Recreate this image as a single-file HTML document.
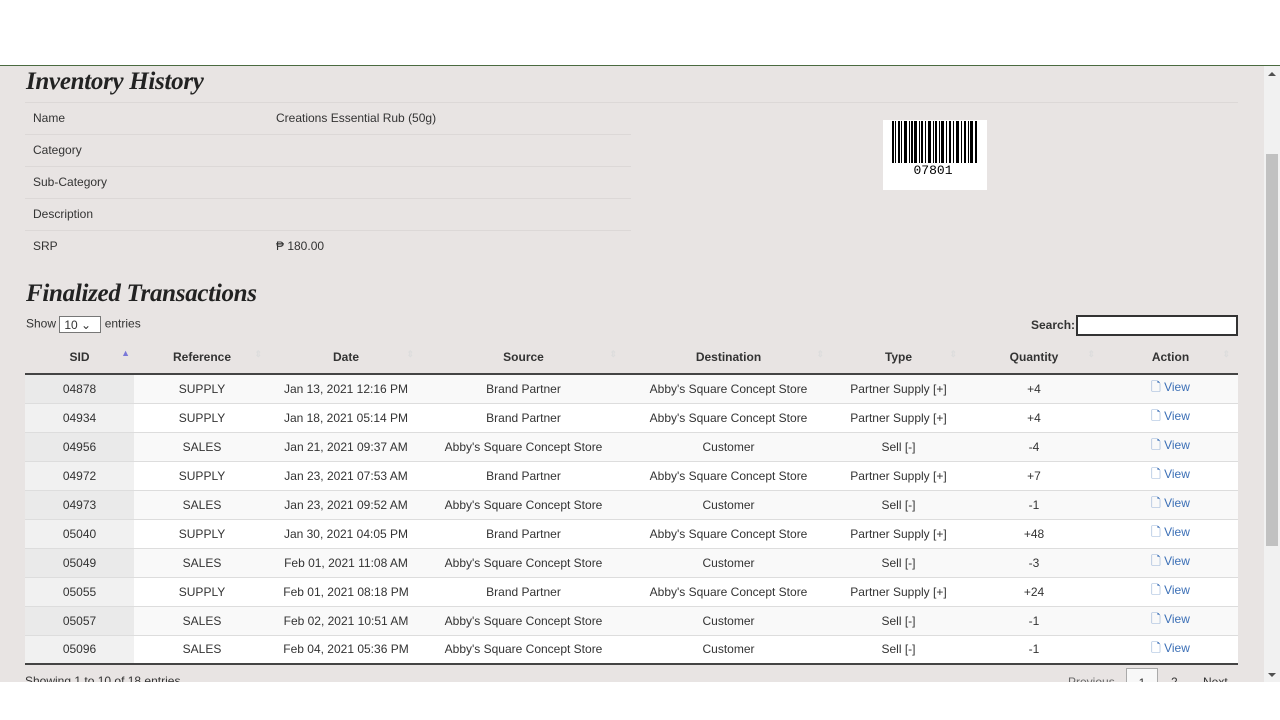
<!DOCTYPE html>
<html><head><style>
*{margin:0;padding:0;box-sizing:border-box}
body{width:1280px;height:720px;background:#fff;font-family:"Liberation Sans",Arial,sans-serif;font-size:12px;color:#333;position:relative;overflow:hidden}
#view{position:absolute;left:0;top:65px;width:1280px;height:617px;background:#e8e4e3;border-top:1px solid #4a6a40;overflow:hidden}
.sb{position:absolute;right:0;top:0;width:16px;height:617px;background:#f1f1f1}
.thumb{position:absolute;left:2px;top:88px;width:12px;height:392px;background:#c1c1c1}
h1{position:absolute;font-family:"Liberation Serif",serif;font-style:italic;font-weight:bold;font-size:25px;color:#222;letter-spacing:-0.3px}
.info{position:absolute;left:25px;top:36px;width:606px;border-collapse:collapse}
.info td{height:32px;border-top:1px solid #dcd8d7;padding-left:8px;color:#333}
.line{position:absolute;left:25px;top:36px;width:1213px;border-top:1px solid #dcd8d7}
.bc{position:absolute;left:883px;top:54px;width:104px;height:70px;background:#fff}
table.dt{position:absolute;left:25px;top:274px;width:1213px;border-collapse:collapse;table-layout:fixed}
.dt th{height:34px;font-weight:bold;color:#333;border-bottom:2px solid #444;text-align:center;position:relative}
.dt td{height:29px;text-align:center;border-top:1px solid #ddd;background:#fff}
.dt tr.o td{background:#f9f9f9}
.dt td.s{background:#f1f1f1}
.dt tr.o td.s{background:#eaeaea}
.dt tbody tr:last-child td{border-bottom:2px solid #444}
.ar{position:absolute;right:8px;top:9px;font-size:9px;color:#ddd}
a{color:#3b6fb6;text-decoration:none}
</style></head><body>
<div id="view">
<div class="sb"><div style="position:absolute;left:4px;top:6px;border:4px solid transparent;border-bottom:4px solid #505050;border-top:0"></div><div class="thumb"></div><div style="position:absolute;left:4px;bottom:6px;border:4px solid transparent;border-top:4px solid #505050;border-bottom:0"></div></div>
<h1 style="left:26px;top:2px">Inventory History</h1>
<div class="line"></div>
<table class="info">
<tr><td style="width:243px;border-top:0">Name</td><td style="border-top:0">Creations Essential Rub (50g)</td></tr>
<tr><td>Category</td><td></td></tr>
<tr><td>Sub-Category</td><td></td></tr>
<tr><td>Description</td><td></td></tr>
<tr><td>SRP</td><td>₱ 180.00</td></tr>
</table>
<div class="bc"><svg width="104" height="70"><g fill="#000">
<rect x="9" y="1" width="2" height="42"/><rect x="12" y="1" width="1" height="42"/><rect x="15" y="1" width="2" height="42"/><rect x="18" y="1" width="1" height="42"/><rect x="21" y="1" width="3" height="42"/><rect x="26" y="1" width="1" height="42"/><rect x="28" y="1" width="2" height="42"/><rect x="31" y="1" width="3" height="42"/><rect x="36" y="1" width="1" height="42"/><rect x="38" y="1" width="2" height="42"/><rect x="42" y="1" width="1" height="42"/><rect x="45" y="1" width="3" height="42"/><rect x="50" y="1" width="1" height="42"/><rect x="52" y="1" width="2" height="42"/><rect x="56" y="1" width="1" height="42"/><rect x="58" y="1" width="3" height="42"/><rect x="63" y="1" width="1" height="42"/><rect x="66" y="1" width="2" height="42"/><rect x="70" y="1" width="1" height="42"/><rect x="73" y="1" width="3" height="42"/><rect x="78" y="1" width="1" height="42"/><rect x="81" y="1" width="2" height="42"/><rect x="85" y="1" width="1" height="42"/><rect x="87" y="1" width="3" height="42"/><rect x="92" y="1" width="2" height="42"/></g>
<text x="50" y="54" font-family="Liberation Mono,monospace" font-size="13" text-anchor="middle" fill="#000">07801</text></svg></div>
<h1 style="left:26px;top:214px">Finalized Transactions</h1>
<div style="position:absolute;left:26px;top:250px;font-size:12px">Show <span style="display:inline-block;width:42px;height:17px;border:1px solid #777;background:#fff;vertical-align:middle;padding:1px 4px;font-size:12px">10 &#8964;</span> entries</div>
<div style="position:absolute;left:1031px;top:252px;font-weight:bold">Search:</div>
<div style="position:absolute;left:1076px;top:249px;width:162px;height:21px;border:2px solid #333;background:#fff"></div>
<table class="dt">
<colgroup><col style="width:109px"><col style="width:136px"><col style="width:152px"><col style="width:203px"><col style="width:207px"><col style="width:133px"><col style="width:138px"><col style="width:135px"></colgroup>
<thead><tr><th>SID<span class="ar" style="color:#7a78d8;right:4px;top:8px">▲</span></th><th>Reference<span class="ar">⇕</span></th><th>Date<span class="ar">⇕</span></th><th>Source<span class="ar">⇕</span></th><th>Destination<span class="ar">⇕</span></th><th>Type<span class="ar">⇕</span></th><th>Quantity<span class="ar">⇕</span></th><th>Action<span class="ar">⇕</span></th></tr></thead>
<tbody>
<tr class="o"><td class="s">04878</td><td>SUPPLY</td><td>Jan 13, 2021 12:16 PM</td><td>Brand Partner</td><td>Abby's Square Concept Store</td><td>Partner Supply [+]</td><td>+4</td><td><a>🗋 View</a></td></tr>
<tr><td class="s">04934</td><td>SUPPLY</td><td>Jan 18, 2021 05:14 PM</td><td>Brand Partner</td><td>Abby's Square Concept Store</td><td>Partner Supply [+]</td><td>+4</td><td><a>🗋 View</a></td></tr>
<tr class="o"><td class="s">04956</td><td>SALES</td><td>Jan 21, 2021 09:37 AM</td><td>Abby's Square Concept Store</td><td>Customer</td><td>Sell [-]</td><td>-4</td><td><a>🗋 View</a></td></tr>
<tr><td class="s">04972</td><td>SUPPLY</td><td>Jan 23, 2021 07:53 AM</td><td>Brand Partner</td><td>Abby's Square Concept Store</td><td>Partner Supply [+]</td><td>+7</td><td><a>🗋 View</a></td></tr>
<tr class="o"><td class="s">04973</td><td>SALES</td><td>Jan 23, 2021 09:52 AM</td><td>Abby's Square Concept Store</td><td>Customer</td><td>Sell [-]</td><td>-1</td><td><a>🗋 View</a></td></tr>
<tr><td class="s">05040</td><td>SUPPLY</td><td>Jan 30, 2021 04:05 PM</td><td>Brand Partner</td><td>Abby's Square Concept Store</td><td>Partner Supply [+]</td><td>+48</td><td><a>🗋 View</a></td></tr>
<tr class="o"><td class="s">05049</td><td>SALES</td><td>Feb 01, 2021 11:08 AM</td><td>Abby's Square Concept Store</td><td>Customer</td><td>Sell [-]</td><td>-3</td><td><a>🗋 View</a></td></tr>
<tr><td class="s">05055</td><td>SUPPLY</td><td>Feb 01, 2021 08:18 PM</td><td>Brand Partner</td><td>Abby's Square Concept Store</td><td>Partner Supply [+]</td><td>+24</td><td><a>🗋 View</a></td></tr>
<tr class="o"><td class="s">05057</td><td>SALES</td><td>Feb 02, 2021 10:51 AM</td><td>Abby's Square Concept Store</td><td>Customer</td><td>Sell [-]</td><td>-1</td><td><a>🗋 View</a></td></tr>
<tr><td class="s">05096</td><td>SALES</td><td>Feb 04, 2021 05:36 PM</td><td>Abby's Square Concept Store</td><td>Customer</td><td>Sell [-]</td><td>-1</td><td><a>🗋 View</a></td></tr>
</tbody></table>
<div style="position:absolute;left:25px;top:608px">Showing 1 to 10 of 18 entries</div>
<div style="position:absolute;left:1068px;top:609px;color:#666">Previous</div>
<div style="position:absolute;left:1126px;top:602px;width:32px;height:24px;border:1px solid #aaa;background:#f8f8f8;text-align:center;padding-top:7px">1</div>
<div style="position:absolute;left:1171px;top:609px">2</div>
<div style="position:absolute;left:1203px;top:609px">Next</div>
</div>
</body></html>
